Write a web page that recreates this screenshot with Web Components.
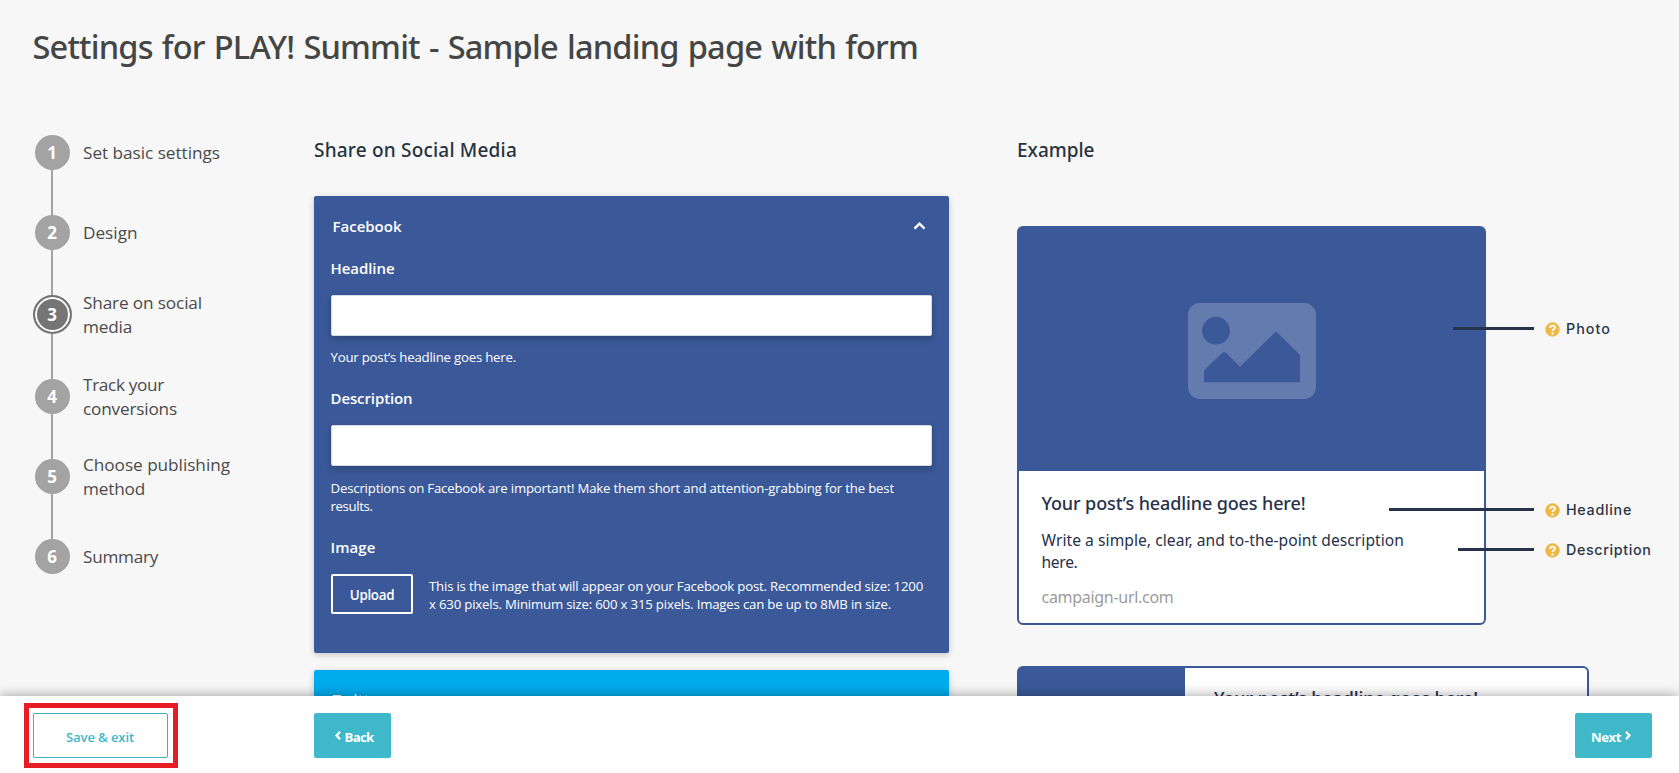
<!DOCTYPE html>
<html lang="en">
<head>
<meta charset="utf-8">
<title>Settings for PLAY! Summit</title>
<style>
html,body{margin:0;height:100%;overflow:hidden;background:#f7f7f7;font-family:"Open Sans","Noto Sans",sans-serif;color:#444}
</style>
</head>
<body>
<settings-page></settings-page>

<template id="page">
<style>
:host{display:flex;flex-direction:column;height:773px;overflow:hidden;background:#f7f7f7}
.scroll{flex:1;min-height:0;overflow:hidden}
.title{font:500 32.6px/44px "Noto Sans","Open Sans",sans-serif;word-spacing:1.5px;padding:25px 0 0 32.5px;color:#444645}
.columns{display:grid;grid-template-columns:281px 635px 1fr;column-gap:0;padding-left:33px;margin-top:51px}
.right{padding-left:68px}
h2{margin:17px 0 0;font:500 19px/26px "Noto Sans","Open Sans",sans-serif;color:#27323f}
social-card{margin-top:33px}
social-card.next{margin-top:17px}
post-preview{margin-top:63px}
post-preview[wide]{margin-top:41px}
.up{display:flex;align-items:flex-start;margin-top:16px;gap:16px}
.upload{box-sizing:border-box;width:82px;height:40px;border:2px solid #fff;border-radius:2px;display:flex;align-items:center;justify-content:center;font-size:13.4px;line-height:18px;font-weight:600;padding-top:2px}
.note{font-size:13.2px;line-height:18px;padding-top:3px}
</style>
<div class="scroll">
  <div class="title"><text-line w="885.5">Settings for PLAY! Summit - Sample landing page with form</text-line></div>
  <div class="columns">
    <step-list>
      <step-item n="1"><text-line w="137">Set basic settings</text-line></step-item>
      <step-item n="2"><text-line w="54.5">Design</text-line></step-item>
      <step-item n="3" active><text-line w="119">Share on social</text-line><text-line w="49">media</text-line></step-item>
      <step-item n="4"><text-line w="81">Track your</text-line><text-line w="94">conversions</text-line></step-item>
      <step-item n="5"><text-line w="147">Choose publishing</text-line><text-line w="62">method</text-line></step-item>
      <step-item n="6"><text-line w="75">Summary</text-line></step-item>
    </step-list>
    <div>
      <h2><text-line w="203">Share on Social Media</text-line></h2>
      <social-card style="--bg:#3b5998;--h:457px"><text-line slot="name" w="69">Facebook</text-line>
        <form-field style="--top:19.5px;--gap:12px"><text-line slot="label" w="64">Headline</text-line><input slot="input" aria-label="Headline"><text-line w="185.5">Your post’s headline goes here.</text-line></form-field>
        <form-field style="--top:21.5px;--gap:13px"><text-line slot="label" w="82">Description</text-line><input slot="input" aria-label="Description"><text-line w="563.5">Descriptions on Facebook are important! Make them short and attention-grabbing for the best</text-line><text-line w="42">results.</text-line></form-field>
        <form-field style="--top:20.5px"><text-line slot="label" w="45">Image</text-line></form-field>
        <div class="up"><div class="upload"><text-line w="44.5">Upload</text-line></div><div class="note"><text-line w="494">This is the image that will appear on your Facebook post. Recommended size: 1200</text-line><text-line w="462">x 630 pixels. Minimum size: 600 x 315 pixels. Images can be up to 8MB in size.</text-line></div></div>
      </social-card>
      <social-card class="next" style="--bg:#00aced;--h:60px;--pad:18px;--chevron:none"><text-line slot="name" w="52">Twitter</text-line></social-card>
    </div>
    <div class="right">
      <h2><text-line w="77.5">Example</text-line></h2>
      <post-preview>
        <text-line slot="headline" w="264">Your post’s headline goes here!</text-line>
        <text-line slot="text" w="362.5">Write a simple, clear, and to-the-point description</text-line>
        <text-line slot="text" w="36">here.</text-line>
        <text-line slot="url" w="132">campaign-url.com</text-line>
        <call-out slot="notes" style="top:91px;left:434px;--line:81px"><text-line w="45">Photo</text-line></call-out>
        <call-out slot="notes" style="top:272px;left:370px;--line:145px"><text-line w="66">Headline</text-line></call-out>
        <call-out slot="notes" style="top:312px;left:439px;--line:76px"><text-line w="85.5">Description</text-line></call-out>
      </post-preview>
      <post-preview wide><text-line slot="headline" w="264">Your post’s headline goes here!</text-line></post-preview>
    </div>
  </div>
</div>
<action-bar></action-bar>
</template>

<script>
const define = (name, html, init) => customElements.define(name, class extends HTMLElement {
  connectedCallback() {
    if (this.shadowRoot) return;
    this.attachShadow({mode: 'open'}).innerHTML = html;
    if (init) init.call(this, this.shadowRoot);
  }
});

/* One line of text whose tracking is tuned so that it spans w pixels. */
define('text-line', `<style>:host{display:block;white-space:nowrap}span{display:inline-block}</style><span><slot></slot></span>`, function (root) {
  const span = root.querySelector('span'), n = this.textContent.length, w = +this.getAttribute('w');
  requestAnimationFrame(() => {
    const now = span.getBoundingClientRect().width;
    if (w && now) { span.style.letterSpacing = (w - now) / n + 'px'; }
  });
});

define('step-list', `<style>:host{display:flex;flex-direction:column;padding-top:15px}</style><slot></slot>`);

define('step-item', `<style>
:host{display:block}
.row{display:flex;align-items:center;height:35px;padding-left:2px}
.dot{flex:none;box-sizing:border-box;width:35px;height:35px;border-radius:50%;background:#a3a3a3;color:#fff;font-weight:700;font-size:17px;line-height:36px;text-align:center;padding-right:1px}
.label{padding-left:13px;font-size:17.2px;line-height:24px;color:#4a4a4a}
.rail{width:2px;height:45px;margin-left:18px;background:#a3a3a3}
:host([active]) .row{height:39px;padding-left:0}
:host([active]) .dot{width:39px;height:39px;border:2px solid #757575;background:#757575;box-shadow:inset 0 0 0 2px #fff;line-height:36px}
:host([active]) .label{padding-left:11px}
:host([n="6"]) .rail{display:none}
</style><div class="row"><div class="dot"></div><div class="label"><slot></slot></div></div><div class="rail"></div>`,
function (root) { root.querySelector('.dot').textContent = this.getAttribute('n'); });

define('social-card', `<style>
:host{display:block;box-sizing:border-box;height:var(--h);background:var(--bg);border-radius:2px;padding:var(--pad,19px) 17px 0;color:#fff;box-shadow:0 2px 6px rgba(0,0,0,.2)}
header{display:flex;justify-content:space-between;padding:0 6px 0 1.5px;font-size:15px;line-height:22px;font-weight:600}
svg{margin-top:7px;display:var(--chevron,block)}
</style><header><slot name="name"></slot><svg width="13" height="8" viewBox="0 0 13 8"><path d="M1.5 6.7 6.5 1.7l5 5" fill="none" stroke="#fff" stroke-width="2.4"/></svg></header><slot></slot>`);

define('form-field', `<style>
:host{display:block;margin-top:var(--top)}
.label{font-size:15px;line-height:22px;font-weight:600;margin-left:-.5px}
::slotted(input){display:block;box-sizing:border-box;width:601px;height:41px;margin:16px 0 var(--gap);border:1px solid #d5dbe8;border-radius:2px;background:#fff;box-shadow:0 3px 7px rgba(0,0,0,.22)}
.help{font-size:13.2px;line-height:18px;margin-left:-.5px}
</style><div class="label"><slot name="label"></slot></div><slot name="input"></slot><div class="help"><slot></slot></div>`);

define('post-preview', `<style>
:host{display:block;position:relative;box-sizing:border-box;width:469px;height:399px;border:2px solid #3b5998;border-radius:6px;background:#fff;font-family:"Noto Sans","Open Sans",sans-serif;color:#26314a}
.photo{height:243px;background:#3b5998;display:flex;justify-content:center;align-items:flex-start}
svg{margin-top:75px}
.copy{padding:19px 0 0 22.5px}
.headline{font-size:18px;line-height:26px;font-weight:500}
.text{font-size:15.6px;line-height:21.5px;margin-top:14px}
.url{font-size:16px;line-height:22px;margin-top:12.5px;color:#9b9b9b}
:host([wide]){display:flex;width:572px;height:160px}
:host([wide]) .photo{width:166px;height:100%}
:host([wide]) svg,:host([wide]) .text,:host([wide]) .url{display:none}
:host([wide]) .copy{padding:17px 0 0 29px}
</style>
<div class="photo"><svg width="128" height="96" viewBox="0 0 128 97" preserveAspectRatio="none"><rect width="128" height="97" rx="12" fill="#647bad"/><circle cx="28" cy="28" r="14" fill="#3b5998"/><path d="M16 80V68L34.5 50.2Q36.3 48.5 38 50.2L52 64.5 86.3 30.2Q88 28.5 89.8 30.2L112 52.5V80Z" fill="#3b5998"/></svg></div>
<div class="copy"><div class="headline"><slot name="headline"></slot></div><div class="text"><slot name="text"></slot></div><div class="url"><slot name="url"></slot></div></div>
<slot name="notes"></slot>`);

define('call-out', `<style>
:host{position:absolute;display:flex;align-items:center;height:20px;font:450 14.3px/20px Inter,sans-serif;color:#2b3548}
i{width:var(--line);height:2.6px;background:#26334a;margin-top:-1px}
svg{margin:0 6px 0 11px}
</style><i></i><svg width="15" height="15" viewBox="0 0 15 15"><circle cx="7.5" cy="7.5" r="7.2" fill="#efb845"/><path d="M5.1 5.9C5.2 2.9 9.9 2.9 9.9 5.6 9.9 7.3 7.5 7.1 7.5 9" fill="none" stroke="#fff" stroke-width="1.9"/><circle cx="7.5" cy="11.4" r="1.2" fill="#fff"/></svg><slot></slot>`);

define('action-bar', `<style>
:host{display:flex;flex:none;box-sizing:border-box;height:77px;padding:7px 27px 0 24px;background:#fff;box-shadow:0 0 12px rgba(0,0,0,.38);position:relative;font-size:13.2px;line-height:18px;font-weight:600}
.mark{box-sizing:border-box;width:154px;height:65px;border:5px solid #e81c24;padding:5px 5px 5px 4px}
.save,.btn{box-sizing:border-box;display:flex;align-items:center;justify-content:center;height:45px;border-radius:2px;padding-top:3px}
.save{border:1px solid #3fb0c2;color:#3fb8c9;padding-right:1px}
.btn{width:77px;margin-top:10px;background:#3fb9ca;color:#fff;gap:4px;font-weight:700}
.back{margin-left:136px;padding-left:3px}.next{margin-left:auto;padding-right:5px}
svg{margin-bottom:4px}
</style>
<div class="mark"><div class="save"><text-line w="68">Save &amp; exit</text-line></div></div>
<div class="btn back"><svg width="6" height="9" viewBox="0 0 6 9"><path d="M5 .8 1.6 4.5 5 8.2" fill="none" stroke="#fff" stroke-width="2.3"/></svg><text-line w="29">Back</text-line></div>
<div class="btn next"><text-line w="30">Next</text-line><svg width="6" height="9" viewBox="0 0 6 9"><path d="M1 .8 4.4 4.5 1 8.2" fill="none" stroke="#fff" stroke-width="2.3"/></svg></div>`);

customElements.define('settings-page', class extends HTMLElement {
  constructor() {
    super();
    this.attachShadow({mode: 'open'}).append(document.getElementById('page').content.cloneNode(true));
  }
});
</script>
</body>
</html>
